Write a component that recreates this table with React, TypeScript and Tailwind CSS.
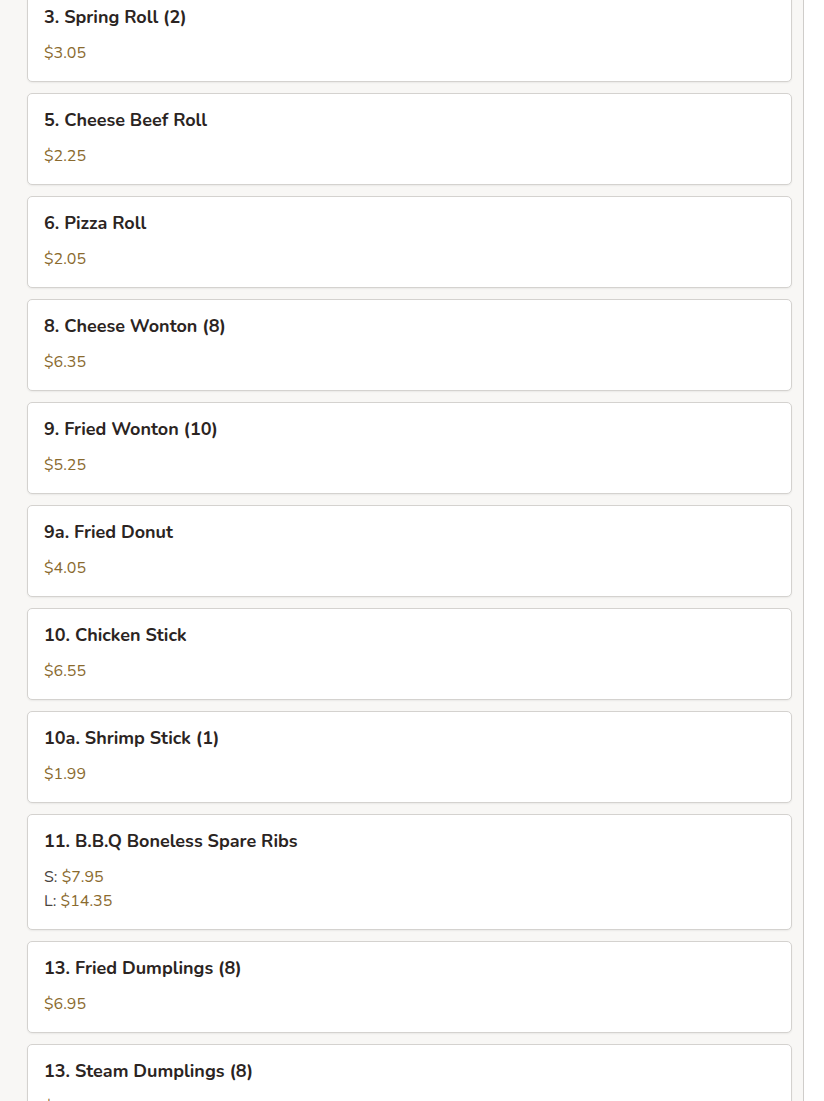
import React from 'react';

type Item = {
	name: string;
	prices: { label?: string; value: string }[];
};

const items: Item[] = [
	{ name: '3. Spring Roll (2)', prices: [{ value: '$3.05' }] },
	{ name: '5. Cheese Beef Roll', prices: [{ value: '$2.25' }] },
	{ name: '6. Pizza Roll', prices: [{ value: '$2.05' }] },
	{ name: '8. Cheese Wonton (8)', prices: [{ value: '$6.35' }] },
	{ name: '9. Fried Wonton (10)', prices: [{ value: '$5.25' }] },
	{ name: '9a. Fried Donut', prices: [{ value: '$4.05' }] },
	{ name: '10. Chicken Stick', prices: [{ value: '$6.55' }] },
	{ name: '10a. Shrimp Stick (1)', prices: [{ value: '$1.99' }] },
	{
		name: '11. B.B.Q Boneless Spare Ribs',
		prices: [
			{ label: 'S:', value: '$7.95' },
			{ label: 'L:', value: '$14.35' },
		],
	},
	{ name: '13. Fried Dumplings (8)', prices: [{ value: '$6.95' }] },
	{ name: '13. Steam Dumplings (8)', prices: [{ value: '$6.95' }] },
];

const MenuCard: React.FC<{ item: Item }> = ({ item }) => (
	<div className="bg-white border border-[#d4d2cf] rounded-[5px] shadow-[0_1px_2px_rgba(0,0,0,0.06)] p-4">
		<h3 className="text-[18px] leading-[20px] font-bold text-[#2b2422] mb-[14px]">{item.name}</h3>
		<div>
			{item.prices.map((p, i) => (
				<div key={i} className="text-base leading-6">
					{p.label && <span className="text-[#4a4440]">{p.label} </span>}
					<span className="text-[#8a6a2e]">{p.value}</span>
				</div>
			))}
		</div>
	</div>
);

export default function App() {
	return (
		<div
			className="flex bg-white h-[1101px] overflow-hidden"
			style={{ fontFamily: 'Nunito, Lato, "Noto Sans", sans-serif' }}
		>
			<div className="w-[804px] bg-[#f8f7f5] border-r border-[#cfcdca] pl-[27px] pr-[11px]">
				<div className="-mt-[10px] flex flex-col gap-[11px]">
					{items.map((item) => (
						<MenuCard key={item.name} item={item} />
					))}
				</div>
			</div>
		</div>
	);
}
